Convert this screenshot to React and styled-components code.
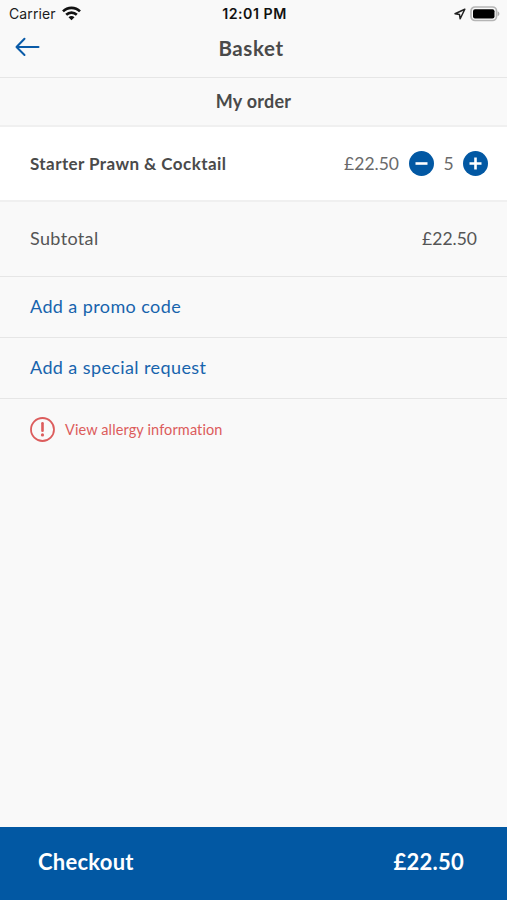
import { useState } from "react";
import styled, { createGlobalStyle } from "styled-components";

const GlobalStyle = createGlobalStyle`
  * {
    box-sizing: border-box;
  }
  body {
    margin: 0;
    background: #f9f9f9;
    font-family: Lato, "Open Sans", sans-serif;
    font-variant-ligatures: none;
    color: #4a4a4a;
  }
  button {
    font: inherit;
    border: none;
    background: none;
    padding: 0;
    cursor: pointer;
  }
`;

const Screen = styled.div`
  display: flex;
  flex-direction: column;
  height: 100vh;
  background: #f9f9f9;
`;

const StatusBar = styled.div`
  display: grid;
  grid-template-columns: 1fr auto 1fr;
  align-items: center;
  height: 27px;
  padding: 0 7px 0 9px;
  font-family: Inter, sans-serif;
  font-size: 14px;
  color: #1c1c1c;
`;

const Carrier = styled.div`
  display: flex;
  align-items: center;
  gap: 6px;
  letter-spacing: 0.1px;
`;

const Time = styled.div`
  font-weight: 600;
  font-size: 14.2px;
  letter-spacing: 0.5px;
  color: #111;
`;

const StatusIcons = styled.div`
  display: flex;
  align-items: center;
  justify-content: flex-end;
  gap: 4px;
`;

const Header = styled.header`
  display: grid;
  grid-template-columns: 40px 1fr 40px;
  align-items: center;
  height: 51px;
  padding: 0 18px 9px 13px;
  border-bottom: 1px solid #e6e6e6;
`;

const BackButton = styled.button`
  display: flex;
  color: #0a5ba8;
  padding-bottom: 2px;
`;

const Title = styled.h1`
  margin: 0;
  font-size: 20.5px;
  font-weight: 700;
  line-height: 28px;
  letter-spacing: 0.6px;
  text-align: center;
`;

const SectionTitle = styled.h2`
  display: flex;
  align-items: center;
  justify-content: center;
  height: 49px;
  margin: 0;
  padding-bottom: 2px;
  border-bottom: 2px solid #f0f0f0;
  font-size: 18px;
  font-weight: 700;
  letter-spacing: 0.25px;
`;

const Item = styled.div`
  display: flex;
  align-items: center;
  height: 75px;
  padding: 0 19px 0 30px;
  background: #fff;
  border-bottom: 2px solid #f0f0f0;
`;

const ItemName = styled.div`
  flex: 1;
  font-size: 17px;
  font-weight: 700;
  letter-spacing: 0.42px;
`;

const ItemPrice = styled.div`
  margin-right: 10px;
  font-size: 17.5px;
  color: #6a6a6a;
`;

const Stepper = styled.div`
  display: flex;
  align-items: center;
`;

const StepButton = styled.button`
  display: flex;
  color: #0258a3;
`;

const Quantity = styled.div`
  width: 29px;
  text-align: center;
  font-size: 17.5px;
  color: #6a6a6a;
`;

const Subtotal = styled.div`
  display: flex;
  align-items: center;
  justify-content: space-between;
  height: 75px;
  padding: 0 30px 2px;
  border-bottom: 1px solid #e6e6e6;
  font-size: 17.5px;
  color: #555;
`;

const SubtotalLabel = styled.span`
  font-size: 18px;
  letter-spacing: 0.35px;
`;

const LinkRow = styled.button`
  height: 61px;
  padding: 0 30px 2px;
  border-bottom: 1px solid #e6e6e6;
  font-size: 18px;
  letter-spacing: 0.4px;
  text-align: left;
  color: #1764ad;
`;

const AllergyLink = styled.button`
  display: flex;
  align-items: center;
  gap: 10px;
  height: 62px;
  padding: 0 30px 1px;
  font-size: 14.5px;
  letter-spacing: 0.12px;
  color: #dc5c5c;
`;

const CheckoutBar = styled.button`
  display: flex;
  align-items: center;
  justify-content: space-between;
  height: 73px;
  margin-top: auto;
  padding: 0 43px 4px 38px;
  background: #0258a3;
  color: #fff;
  font-size: 22px;
  font-weight: 700;
  letter-spacing: 0.25px;
`;

const WifiIcon = () => (
  <svg width="19" height="15" viewBox="0 0 19 15">
    <g fill="none" stroke="#111" strokeWidth="2.6">
      <path d="M1 5.4C5.7.7 13.3.7 18 5.4" />
      <path d="M4.2 8.8c3-2.9 7.6-2.9 10.6 0" />
    </g>
    <path d="M9.5 14.2 6.5 11.2c1.7-1.5 4.3-1.5 6 0Z" fill="#111" />
  </svg>
);

const LocationIcon = () => (
  <svg width="12" height="12" viewBox="0 0 12 12">
    <path
      d="M10.8 1.2 1 5.7l4.5.8.7 4.3Z"
      fill="none"
      stroke="#222"
      strokeWidth="1.5"
      strokeLinejoin="round"
    />
  </svg>
);

const BatteryIcon = () => (
  <svg width="30" height="16" viewBox="0 0 30 16">
    <rect x="1" y="1" width="25.5" height="13.5" rx="4" fill="#f9f9f9" stroke="#b5b5b5" strokeWidth="1.7" />
    <rect x="3" y="3.2" width="21.5" height="9.3" rx="2" fill="#000" />
    <path d="M27.6 5.3c2.4 1.1 2.4 3.9 0 5Z" fill="#ababab" />
  </svg>
);

const BackIcon = () => (
  <svg width="27" height="20" viewBox="0 0 27 20">
    <path
      d="M25.5 10H3.500M11.500 1.800 3.500 10l8 8"
      fill="none"
      stroke="currentColor"
      strokeWidth="2"
      strokeLinecap="round"
      strokeLinejoin="round"
    />
  </svg>
);

const StepIcon = ({ plus }) => (
  <svg width="25" height="25" viewBox="0 0 25 25">
    <circle cx="12.5" cy="12.5" r="12.5" fill="currentColor" />
    <path
      d={plus ? "M6.500 12.500h12M12.500 6.500v12" : "M6.500 12.500h12"}
      stroke="#fff"
      strokeWidth="2.6"
    />
  </svg>
);

const AlertIcon = () => (
  <svg width="25" height="25" viewBox="0 0 25 25">
    <circle cx="12.5" cy="12.5" r="11.5" fill="none" stroke="currentColor" strokeWidth="1.8" />
    <path d="M12.5 6.3v7.5" stroke="currentColor" strokeWidth="2.6" strokeLinecap="round" />
    <circle cx="12.5" cy="17.9" r="1.6" fill="currentColor" />
  </svg>
);

const App = () => {
  const [quantity, setQuantity] = useState(5);

  return (
    <Screen>
      <GlobalStyle />
      <StatusBar>
        <Carrier>
          Carrier
          <WifiIcon />
        </Carrier>
        <Time>12:01 PM</Time>
        <StatusIcons>
          <LocationIcon />
          <BatteryIcon />
        </StatusIcons>
      </StatusBar>
      <Header>
        <BackButton>
          <BackIcon />
        </BackButton>
        <Title>Basket</Title>
      </Header>
      <SectionTitle>My order</SectionTitle>
      <Item>
        <ItemName>Starter Prawn & Cocktail</ItemName>
        <ItemPrice>£22.50</ItemPrice>
        <Stepper>
          <StepButton onClick={() => setQuantity(Math.max(0, quantity - 1))}>
            <StepIcon />
          </StepButton>
          <Quantity>{quantity}</Quantity>
          <StepButton onClick={() => setQuantity(quantity + 1)}>
            <StepIcon plus />
          </StepButton>
        </Stepper>
      </Item>
      <Subtotal>
        <SubtotalLabel>Subtotal</SubtotalLabel>
        <span>£22.50</span>
      </Subtotal>
      <LinkRow>Add a promo code</LinkRow>
      <LinkRow>Add a special request</LinkRow>
      <AllergyLink>
        <AlertIcon />
        View allergy information
      </AllergyLink>
      <CheckoutBar>
        <span>Checkout</span>
        <span>£22.50</span>
      </CheckoutBar>
    </Screen>
  );
};

export default App;
